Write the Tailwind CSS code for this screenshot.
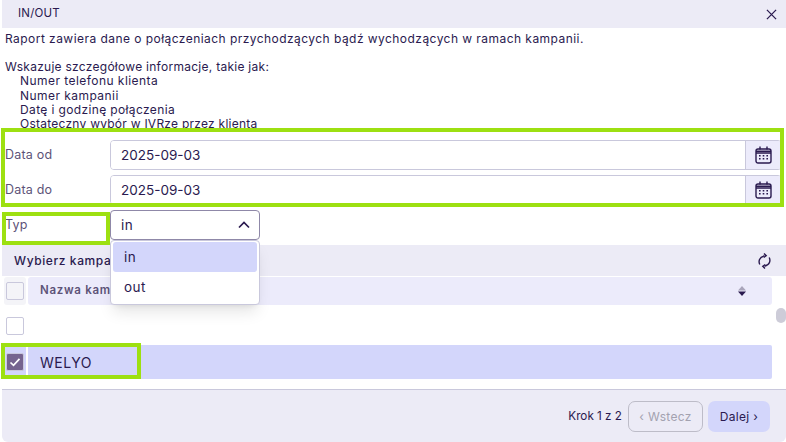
<!DOCTYPE html>
<html lang="pl">
  <head>
    <meta charset="UTF-8" />
    <title>IN/OUT</title>
    <script src="https://cdn.jsdelivr.net/npm/@tailwindcss/browser@4"></script>
  </head>
  <body class="bg-white font-['Inter',sans-serif] text-[#2a1a4f]">
    <div class="relative w-[786px] h-[442px] overflow-hidden pl-[2px] flex flex-col">
      <!-- Naglowek -->
      <header class="flex-none h-[28px] bg-[#ecebf6] flex items-center justify-between pl-[16px] pr-[9px]">
        <h1 class="text-[11.5px] leading-none tracking-[0.2px]">IN/OUT</h1>
        <svg class="w-[11px] h-[11px]" viewBox="0 0 12 12" fill="none" stroke="#2a1a4f" stroke-width="1.4"><path d="M1 1l10 10M11 1L1 11" /></svg>
      </header>

      <!-- Opis raportu -->
      <div class="flex-none h-[100px] overflow-hidden pl-[3px] pt-[4px] text-[12px] leading-[14.2px] tracking-[0.45px]">
        <p>Raport zawiera dane o połączeniach przychodzących bądź wychodzących w ramach kampanii.</p>
        <p class="mt-[14px] tracking-[0.27px]">Wskazuje szczegółowe informacje, takie jak:</p>
        <p class="pl-[15px]">Numer telefonu klienta</p>
        <p class="pl-[15px]">Numer kampanii</p>
        <p class="pl-[15px] tracking-[0.37px]">Datę i godzinę połączenia</p>
        <p class="pl-[15px] tracking-[0.25px]">Ostateczny wybór w IVRze przez klienta</p>
      </div>

      <!-- Formularz -->
      <div class="flex-none pt-[12px] flex flex-col gap-[5px]">
        <div class="flex items-center h-[30px] pr-[4px]">
          <label class="w-[108px] pl-[3px] text-[12.5px] text-[#5d5378] tracking-[0.2px]">Data od</label>
          <div class="flex-1 h-full flex border border-[#c9c8dc] rounded-[4px] overflow-hidden">
            <div class="flex-1 bg-white pl-[10px] flex items-center text-[13.5px]">2025-09-03</div>
            <div class="w-[36px] bg-[#ecebfb] border-l border-[#c9c8dc] flex items-center justify-center">
              <svg class="w-[17px] h-[18px]" viewBox="0 0 17 18" fill="none" stroke="#2a1a4f" stroke-width="1.4"><rect x="1" y="3" width="15" height="14" rx="2" /><path d="M1 5.2h15M1 7h15M5 .5v3M12 .5v3" /><path d="M4 9.8h1.6M7.7 9.8h1.6M11.4 9.8H13M4 12.8h1.6M7.7 12.8h1.6M11.4 12.8H13" stroke-width="1.5" /></svg>
            </div>
          </div>
        </div>
        <div class="flex items-center h-[30px] pr-[4px]">
          <label class="w-[108px] pl-[3px] text-[12.5px] text-[#5d5378] tracking-[0.2px]">Data do</label>
          <div class="flex-1 h-full flex border border-[#c9c8dc] rounded-[4px] overflow-hidden">
            <div class="flex-1 bg-white pl-[10px] flex items-center text-[13.5px]">2025-09-03</div>
            <div class="w-[36px] bg-[#ecebfb] border-l border-[#c9c8dc] flex items-center justify-center">
              <svg class="w-[17px] h-[18px]" viewBox="0 0 17 18" fill="none" stroke="#2a1a4f" stroke-width="1.4"><rect x="1" y="3" width="15" height="14" rx="2" /><path d="M1 5.2h15M1 7h15M5 .5v3M12 .5v3" /><path d="M4 9.8h1.6M7.7 9.8h1.6M11.4 9.8H13M4 12.8h1.6M7.7 12.8h1.6M11.4 12.8H13" stroke-width="1.5" /></svg>
            </div>
          </div>
        </div>
        <div class="flex items-center h-[30px]">
          <label class="w-[108px] pl-[3px] pt-[1px] text-[12.5px] text-[#5d5378] tracking-[0.2px]">Typ</label>
          <div class="relative w-[150px] h-full border border-[#8f88a8] rounded-[4px] pl-[10px] pr-[9px] flex items-center justify-between text-[13.5px] tracking-[0.5px]">
            <span class="pt-[1px]">in</span>
            <svg class="w-[12px] h-[8px]" viewBox="0 0 12 8" fill="none" stroke="#2a1a4f" stroke-width="1.7"><path d="M1 6.5l5-5 5 5" /></svg>
          </div>
        </div>
      </div>

      <!-- Wybor kampanii -->
      <div class="flex-none mt-[5px] h-[31px] bg-[#ecebf6] flex items-center justify-between pl-[12px] pr-[15px]">
        <span class="text-[12px] font-medium tracking-[0.6px]">Wybierz kampanię</span>
        <svg class="w-[13px] h-[16px]" viewBox="0 0 13 16" fill="none" stroke="#2a1a4f" stroke-width="1.4"><path d="M1.8 11.5C.3 8.500 1 4.200 6.500 2.800" /><path d="M6 .5l2.200 2.200-2.500 1.800" /><path d="M11.200 4.500c1.500 3 .8 7.300-4.700 8.700" /><path d="M7 15.500l-2.200-2.200 2.500-1.800" /></svg>
      </div>

      <div class="flex-1 min-h-0 pt-[1px] pr-[14px]">
        <div class="flex h-[28px] gap-[2px] pl-[2px]">
          <div class="w-[22px] bg-[#f4f4f8] rounded-[3px] flex items-center justify-center">
            <span class="w-[18px] h-[18px] border border-[#c9c8dc] rounded-[2px] bg-[#f4f4f8]"></span>
          </div>
          <div class="flex-1 bg-[#ecebfb] rounded-[3px] pl-[12px] pr-[26px] flex items-center justify-between">
            <span class="text-[11.5px] font-semibold text-[#5d5378] tracking-[0.7px]">Nazwa kampanii</span>
            <svg class="w-[8px] h-[10px]" viewBox="0 0 8 10"><path d="M4 0l4 4.500H0z" fill="#a9a5bb" /><path d="M4 10L0 5.500h8z" fill="#2a1a4f" /></svg>
          </div>
        </div>
        <div class="h-[40px] flex items-center pl-[4px] pt-[2px]">
          <span class="w-[18px] h-[18px] border border-[#c9c8dc] rounded-[2px]"></span>
        </div>
        <div class="h-[34px] bg-[#d3d6fb] flex items-center rounded-[2px]">
          <div class="w-[26px] h-full pl-[4px] flex items-center border-r-2 border-white">
            <span class="w-[18px] h-[18px] bg-[#75648f] border border-[#c9c8dc] rounded-[2px] flex items-center justify-center">
              <svg class="w-[12px] h-[10px]" viewBox="0 0 12 10" fill="none" stroke="#fff" stroke-width="1.7"><path d="M1.500 5.500l3 2.800 6-6.500" /></svg>
            </span>
          </div>
          <span class="pl-[12px] text-[14px] tracking-[0.5px]">WELYO</span>
        </div>
      </div>

      <!-- Stopka -->
      <footer class="flex-none h-[53px] bg-[#ecebf6] border-t border-[#c9c8dc] rounded-b-[6px] flex items-center justify-end pr-[16px] pt-[1px]">
        <span class="text-[11.7px] mr-[6px]">Krok 1 z 2</span>
        <button class="w-[75px] h-[31px] border border-[#bdbcc8] rounded-[7px] text-[12px] text-[#a3a2b0] tracking-[0.3px] mr-[5px]">‹ Wstecz</button>
        <button class="w-[62px] h-[31px] bg-[#d3d6fb] rounded-[7px] text-[12px] tracking-[0.3px]">Dalej ›</button>
      </footer>

      <!-- Lista rozwijana typu -->
      <div class="absolute left-[110px] top-[240px] w-[150px] h-[65px] bg-white border border-[#c9c8dc] rounded-[4px] shadow-lg px-[2px] pt-[1px] text-[13.5px] tracking-[0.5px]">
        <div class="h-[30px] bg-[#d3d6fb] rounded-[3px] pl-[11px] flex items-center">in</div>
        <div class="h-[30px] pl-[11px] flex items-center">out</div>
      </div>

      <!-- Suwak -->
      <div class="absolute left-[776px] top-[308px] w-[10px] h-[15px] bg-[#cdccd8] rounded-[5px]"></div>

      <!-- Zielone ramki -->
      <div class="absolute left-[1px] top-[128px] w-[783px] h-[79px] border-[4px] border-[#9de011]"></div>
      <div class="absolute left-[2px] top-[212px] w-[108px] h-[33px] border-[4px] border-[#9de011]"></div>
      <div class="absolute left-[1px] top-[343px] w-[140px] h-[36px] border-[4px] border-[#9de011]"></div>
    </div>
  </body>
</html>
